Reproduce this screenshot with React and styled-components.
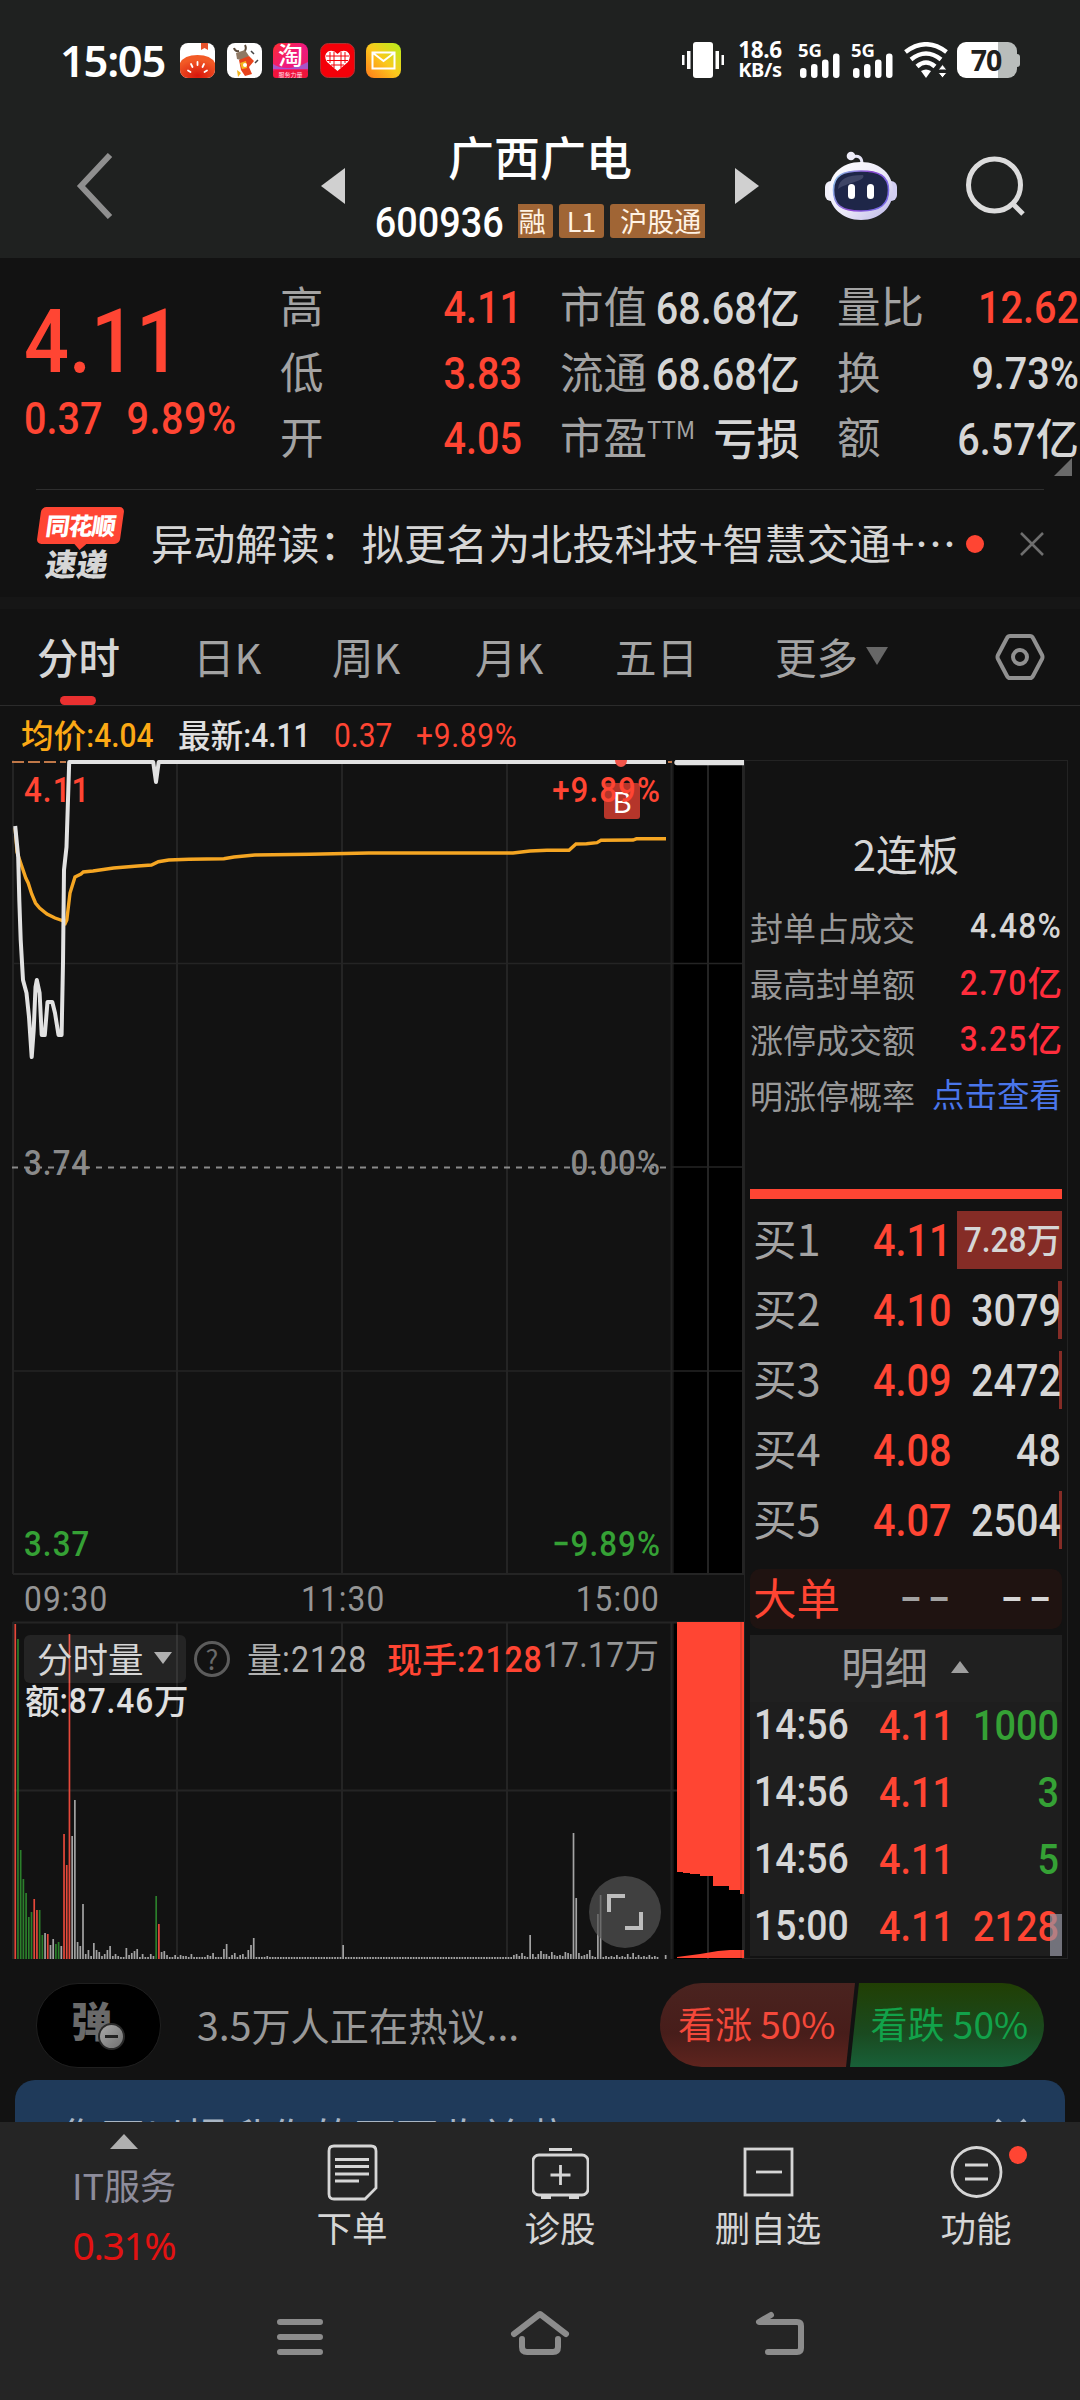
import React from "react"
import styled, { createGlobalStyle } from "styled-components"

const RED = "#ff4533"
const GREEN = "#35a135"
const LIGHT = "#d6d6d6"
const GREY = "#a3a3a3"

const GlobalStyle = createGlobalStyle`
  body {
    margin: 0;
    background: #121212;
    font-family: "Noto Sans CJK SC", "Noto Sans", sans-serif;
    -webkit-font-smoothing: antialiased;
  }
  * {
    box-sizing: border-box;
  }
  svg {
    display: block;
    flex: none;
  }
`

const Screen = styled.div`
  width: 1080px;
  height: 2400px;
  overflow: hidden;
  background: #121212;
  display: flex;
  flex-direction: column;
`

// figures are set tall and narrow, hanzi next to them keep their shape
const Figure = styled.span`
  font-family: Roboto, sans-serif;
  font-size: ${p => p.size || 45}px;
  font-weight: ${p => p.weight || 500};
  letter-spacing: ${p => p.ls || 0}px;
  color: ${p => p.color || LIGHT};
  line-height: 1;
  white-space: nowrap;
`

const Digits = styled.span`
  display: inline-block;
  font-size: 0.88em;
  transform: translateY(-2px) scaleY(1.135);
`

const Hanzi = styled.span`
  font-family: "Noto Sans CJK SC", sans-serif;
  font-size: 0.96em;
  line-height: 1;
  letter-spacing: 0;
`

const Num = ({ children, ...rest }) => (
  <Figure {...rest}>
    {String(children)
      .split(/([\u4e00-\u9fa5]+)/)
      .filter(Boolean)
      .map((part, i) =>
        /[\u4e00-\u9fa5]/.test(part) ? (
          <Hanzi key={i}>{part}</Hanzi>
        ) : (
          <Digits key={i}>{part}</Digits>
        )
      )}
  </Figure>
)

/* ---------- top ---------- */

const Top = styled.header`
  height: 258px;
  background: #1f2120;
  flex: none;
`

const StatusBar = styled.div`
  height: 120px;
  padding: 0 60px 0 60px;
  display: flex;
  align-items: center;
  color: #fff;
`

const Clock = styled.div`
  font-family: "Noto Sans", sans-serif;
  font-weight: 600;
  font-size: 43.5px;
  letter-spacing: -1.3px;
  line-height: 58px;
  padding-bottom: 1px;
  width: 120px;
`

const AppIcons = styled.div`
  display: flex;
  gap: 11.6px;
  flex: 1;
`

const NetSpeed = styled.div`
  font-family: "Noto Sans", sans-serif;
  font-weight: 700;
  width: 46px;
  margin: 0 15px 0 13px;
  white-space: nowrap;
  display: flex;
  flex-direction: column;
  align-items: center;
`

const Speed = styled.span`
  font-size: ${p => p.size}px;
  line-height: 20.5px;
  letter-spacing: -0.3px;
`

const SignalBox = styled.div`
  width: 53px;
  height: 36px;
  position: relative;
`

const SignalLabel = styled.span`
  position: absolute;
  left: 0;
  top: -1px;
  font-family: "Noto Sans", sans-serif;
  font-weight: 700;
  font-size: 18.5px;
  line-height: 17px;
`

const Battery = styled.div`
  width: 60px;
  height: 36px;
  margin-left: 9px;
  border-radius: 9px;
  background: linear-gradient(90deg, #fff 68%, #b9bdbb 68%);
  color: #1f2120;
  font-family: "Noto Sans", sans-serif;
  font-weight: 700;
  font-size: 28.5px;
  line-height: 36px;
  text-align: center;
  padding-right: 2px;
  letter-spacing: -1px;
`

const BatteryTip = styled.div`
  width: 3px;
  height: 13px;
  background: #b9bdbb;
  border-radius: 0 3px 3px 0;
`

const TitleBar = styled.div`
  height: 138px;
  display: grid;
  grid-template-columns: 321px 24px 390px 24px 66px 72px 1fr;
  align-items: center;
  padding-bottom: 7px;
`

const BackIcon = styled.div`
  padding-left: 76px;
`

const StockName = styled.div`
  display: flex;
  flex-direction: column;
  align-items: center;
  padding-top: 2px;
`

const Name = styled.h1`
  margin: 0;
  font-size: 46px;
  line-height: 66px;
  font-weight: 500;
  color: #fff;
`

const CodeRow = styled.div`
  display: flex;
  align-items: center;
  height: 64px;
  gap: 6px;
  padding-top: 2px;
`

const Code = styled.div`
  margin-right: 8px;
  padding-top: 3px;
`

const Tag = styled.span`
  height: 34px;
  line-height: 33px;
  font-size: 27px;
  color: #fff3e4;
  background: #a06535;
  border-radius: ${p => p.radius || "3px"};
  padding: ${p => p.pad || "0 8px"};
`

const SearchIcon = styled.div`
  padding-left: 67px;
`

/* ---------- quote ---------- */

const Quote = styled.section`
  height: 231px;
  flex: none;
  display: grid;
  grid-template-columns: 280px 242px 38px 240px 37px 242px;
  position: relative;
`

const PriceBlock = styled.div`
  padding: 39px 0 0 24px;
`

const BigPrice = styled.div`
  height: 88px;
  display: flex;
  align-items: center;
  padding-bottom: 2px;
`

const ChangeRow = styled.div`
  display: flex;
  gap: 24px;
  height: 66px;
  align-items: center;
`

const StatColumn = styled.div`
  padding-top: 17px;
  display: flex;
  flex-direction: column;
`

const Stat = styled.div`
  height: 65.5px;
  display: flex;
  justify-content: space-between;
  align-items: center;
`

const StatLabel = styled.span`
  font-size: 43.5px;
  line-height: 60px;
  padding-bottom: 5px;
  color: ${GREY};
  white-space: nowrap;

  sup {
    font-size: 24px;
    line-height: 20px;
    vertical-align: 15px;
  }
`

const Corner = styled.div`
  position: absolute;
  left: 1054px;
  top: 200px;
  border-left: 18px solid transparent;
  border-bottom: 18px solid #6a6a6a;
`

const News = styled.section`
  height: 108px;
  flex: none;
  margin: 0 36px;
  border-top: 1px solid #2e2e2e;
  display: flex;
  align-items: center;
`

const NewsLogo = styled.div`
  width: 90px;
  height: 74px;
  margin-right: 25px;
  font-weight: 900;
  text-align: center;
`

const LogoTop = styled.div`
  height: 37px;
  width: 83px;
  margin-left: 3px;
  transform: skewX(-8deg);
  border-radius: 5px;
  background: ${RED};
  color: #fff;
  font-size: 24px;
  line-height: 36px;
  letter-spacing: -1px;
  position: relative;

  &::after {
    content: "";
    position: absolute;
    left: 38px;
    top: 37px;
    border: 6px solid transparent;
    border-top-color: ${RED};
    border-bottom: 0;
  }
`

const LogoBottom = styled.div`
  color: ${LIGHT};
  font-size: 31px;
  line-height: 37px;
  padding-right: 7px;
  transform: skewX(-9deg);
`

const NewsText = styled.div`
  font-size: 42px;
  line-height: 60px;
  letter-spacing: 0.15px;
  padding-bottom: 3px;
  color: ${LIGHT};
  white-space: nowrap;
  width: 815px;
`

const Dot = styled.i`
  width: 18px;
  height: 18px;
  border-radius: 50%;
  background: ${RED};
`

const CloseIcon = styled.div`
  margin-left: auto;
`

const Band = styled.div`
  height: 12px;
  flex: none;
  background: #161616;
`

/* ---------- tabs ---------- */

const Tabs = styled.nav`
  height: 97px;
  flex: none;
  border-bottom: 1px solid #2b2b2b;
  display: flex;
  padding-left: 37px;
`

const Tab = styled.div`
  width: ${p => p.w}px;
  font-size: 41.5px;
  line-height: 94px;
  height: 96px;
  color: ${p => (p.active ? LIGHT : GREY)};
  font-weight: ${p => (p.active ? 500 : 400)};
  display: flex;
  align-items: center;
  padding-bottom: 2px;
  position: relative;

  &::after {
    content: "";
    display: ${p => (p.active ? "block" : "none")};
    position: absolute;
    left: 23px;
    bottom: 0;
    width: 36px;
    height: 9px;
    border-radius: 5px;
    background: #e93030;
  }
`

const Triangle = styled.i`
  width: 0;
  height: 0;
  border-left: ${p => p.w}px solid transparent;
  border-right: ${p => p.w}px solid transparent;
  border-${p => (p.up ? "bottom" : "top")}: ${p => p.h}px solid ${p => p.color};
  margin: ${p => p.m || 0};
`

const HexIcon = styled.div`
  margin-left: auto;
  padding: 24px 35px 0 0;
`

/* ---------- chart ---------- */

const Main = styled.main`
  height: 1254px;
  flex: none;
  display: flex;
`

const ChartSide = styled.div`
  width: 744px;
`

const Legend = styled.div`
  height: 54px;
  padding: 5px 0 0 21px;
  display: flex;
  align-items: center;
`

const LegendItem = styled.div`
  width: ${p => p.w}px;
`

const ChartBox = styled.div`
  height: 1200px;
  position: relative;
`

const LabelBox = styled.div`
  position: absolute;
  height: 40px;
  display: flex;
  align-items: center;
  top: ${p => p.y - 19}px;
  ${p => (p.right ? `right: ${744 - p.right}px;` : `left: ${p.x}px;`)}
`

const Label = ({ x, right, y, ...rest }) => (
  <LabelBox x={x} y={y} right={right}>
    <Num ls={1.1} {...rest} />
  </LabelBox>
)

const Badge = styled.div`
  position: absolute;
  left: 604px;
  top: 23px;
  width: 36px;
  height: 36px;
  border-radius: 3px;
  background: #b5352a;
  color: #fff;
  font-size: 29px;
  line-height: 35px;
  text-align: center;
`

const VolumePicker = styled.div`
  position: absolute;
  left: 24px;
  top: 875px;
  width: 162px;
  height: 48px;
  border-radius: 6px;
  background: rgba(255, 255, 255, 0.08);
  display: flex;
  align-items: center;
  padding: 0 0 3px 13px;
  font-size: 35.5px;
  color: ${LIGHT};
`

const Help = styled.div`
  position: absolute;
  left: 194px;
  top: 881px;
  width: 36px;
  height: 36px;
  border: 3px solid #5c5c5c;
  border-radius: 50%;
  color: #6a6a6a;
  font-size: 27px;
  line-height: 29px;
  text-align: center;
`

const Expand = styled.div`
  position: absolute;
  left: 589px;
  top: 1116px;
  width: 72px;
  height: 72px;
  border-radius: 50%;
  background: rgba(84, 84, 84, 0.7);
  padding: 16px;
`

/* ---------- order panel ---------- */

const Panel = styled.aside`
  width: 324px;
  height: 1199px;
  margin-top: 54px;
  border: 1px solid #232323;
  padding: 0 5px;
`

const Streak = styled.div`
  height: 138px;
  padding-top: 60px;
  font-size: 41.5px;
  line-height: 64px;
  color: ${LIGHT};
  text-align: center;
`

const Fact = styled.div`
  height: 56px;
  display: flex;
  justify-content: space-between;
  align-items: center;
  font-size: 33px;
  color: #989898;
  line-height: 50px;
`

const Link = styled.span`
  color: #4a76ea;
  font-size: 32.5px;
  padding-bottom: 4px;
`

const SealBar = styled.div`
  height: 10px;
  margin: 66px 0 6px;
  background: ${RED};
`

const BidRow = styled.div`
  height: 70px;
  display: grid;
  grid-template-columns: 120px 80px 1fr;
  align-items: center;
  padding-left: 3px;
`

const RowLabel = styled.span`
  font-size: 43.5px;
  line-height: 56px;
  padding-bottom: 5px;
  color: ${p => p.color || GREY};
`

const BidVolume = styled.div`
  height: 58px;
  display: flex;
  align-items: center;
  justify-content: flex-end;
  width: 105px;
  padding-right: 1px;
  justify-self: end;
  background: linear-gradient(#852c26, #852c26) right / ${p => p.bar}px 100% no-repeat;
`

const BigOrder = styled.div`
  height: 60px;
  margin: 14px 0 6px;
  border-radius: 10px;
  background: #1f1311;
  display: grid;
  grid-template-columns: 147px 1fr 61px;
  align-items: center;
  padding-left: 3px;
  overflow: hidden;
`

const Details = styled.div`
  height: 321px;
  background: #1e1e1e;
  position: relative;
`

const DetailsHead = styled.div`
  height: 67px;
  background: #202020;
  display: flex;
  align-items: center;
  padding-left: 91px;
`

const Trade = styled.div`
  height: 67px;
  display: grid;
  grid-template-columns: 125px 80px 1fr;
  padding: 1px 3px 22px 4px;
  align-items: center;
`

const TradeVolume = styled.div`
  text-align: right;
`

const Thumb = styled.div`
  position: absolute;
  right: 0;
  bottom: 0;
  width: 12px;
  height: 42px;
  background: rgba(150, 150, 162, 0.7);
`

/* ---------- bottom ---------- */

const Social = styled.section`
  height: 120px;
  flex: none;
  padding: 23px 36px 0;
  display: flex;
`

const DanmuButton = styled.div`
  width: 125px;
  height: 85px;
  border: 1px solid #1f1f1f;
  border-radius: 42px;
  background: #000;
  position: relative;
  padding-left: 34px;
  font-size: 41px;
  font-weight: 900;
  line-height: 70px;
  color: #6a6a6a;
`

const MinusBadge = styled.div`
  position: absolute;
  left: 61px;
  top: 39px;
  width: 27px;
  height: 27px;
  border-radius: 50%;
  border: 2px solid #2a2a2a;
  background: linear-gradient(135deg, #a8a8a8, #707070);

  &::after {
    content: "";
    position: absolute;
    left: 5px;
    top: 10px;
    width: 13px;
    height: 3px;
    background: #222;
  }
`

const Talk = styled.div`
  font-size: 39.2px;
  line-height: 82px;
  color: #999;
  margin-left: 36px;
  flex: 1;
`

const Vote = styled.div`
  width: ${p => p.w}px;
  height: 84px;
  margin-left: ${p => p.ml || 0}px;
  font-size: 37px;
  line-height: 80px;
  text-align: ${p => (p.up ? "left" : "right")};
  padding: ${p => (p.up ? "0 0 0 18px" : "0 16px 0 0")};
  white-space: nowrap;
  color: ${p => (p.up ? "#f4483a" : "#12a24a")};
  background: ${p =>
    p.up
      ? "linear-gradient(#4a231f, #471d1a 60%, #5e241e)"
      : "linear-gradient(#213f04, #1a4a20 60%, #186038)"};
  border-radius: ${p => (p.up ? "42px 0 0 42px" : "0 42px 42px 0")};
  clip-path: ${p =>
    p.up
      ? "polygon(0 0, 100% 0, calc(100% - 9px) 100%, 0 100%)"
      : "polygon(9px 0, 100% 0, 100% 100%, 0 100%)"};
`

const Banner = styled.div`
  height: 42px;
  flex: none;
  margin: 0 15px;
  border-radius: 20px 20px 0 0;
  background: #1f3a5a;
  color: #a9b6c4;
  overflow: hidden;
  display: flex;
  justify-content: space-between;
  padding: 32px 36px 0 45px;
  font-size: 42px;
  line-height: 48px;
`

const BottomNav = styled.nav`
  height: 149px;
  flex: none;
  background: #252525;
  display: grid;
  grid-template-columns: 248px repeat(4, 208px);
`

const IndexCell = styled.div`
  display: flex;
  flex-direction: column;
  align-items: center;
  padding-top: 12px;
  font-size: 36px;
  line-height: 40px;
  color: #8d8c9b;
`

const IndexChange = styled.div`
  font-size: 39px;
  line-height: 50px;
  letter-spacing: -1.4px;
  margin-top: 16px;
  color: #e31212;
  font-family: "Noto Sans", sans-serif;
`

const NavItem = styled.div`
  display: flex;
  flex-direction: column;
  align-items: center;
  padding-top: 20px;
  position: relative;
  font-size: 35.5px;
  line-height: 50px;
  color: ${LIGHT};
`

const NavDot = styled(Dot)`
  position: absolute;
  left: 137px;
  top: 24px;
`

const SystemNav = styled.div`
  height: 130px;
  flex: none;
  background: #252525;
  display: flex;
  justify-content: center;
  gap: 180px;
  padding-top: 35px;
`

/* ---------- data ---------- */

const stats = [
  [
    ["高", "4.11", RED],
    ["低", "3.83", RED],
    ["开", "4.05", RED],
  ],
  [
    ["市值", "68.68亿"],
    ["流通", "68.68亿"],
    ["市盈", "亏损"],
  ],
  [
    ["量比", "12.62", RED],
    ["换", "9.73%"],
    ["额", "6.57亿"],
  ],
]

const tabs = [
  ["日K", 139],
  ["周K", 143],
  ["月K", 140],
  ["五日", 160],
]

const facts = [
  ["封单占成交", "4.48%", LIGHT],
  ["最高封单额", "2.70亿", "#ff2d3c"],
  ["涨停成交额", "3.25亿", "#ff2d3c"],
]

const bids = [
  ["买1", "4.11", "7.28万", 105],
  ["买2", "4.10", "3079", 4],
  ["买3", "4.09", "2472", 3],
  ["买4", "4.08", "48", 0],
  ["买5", "4.07", "2504", 3],
]

const trades = [
  ["14:56", "4.11", "1000", GREEN],
  ["14:56", "4.11", "3", GREEN],
  ["14:56", "4.11", "5", GREEN],
  ["15:00", "4.11", "2128", RED],
]

const priceLine =
  "15.2,66 18.2,97 19.3,140 20.7,180 23,220 26.5,233 29,257 31.7,297 33.7,270 35.5,227 36.8,220 39.6,233 41.7,275 44.8,275 47.5,242 52.3,242 55,253 58.5,275 61.6,275 63,203 64,110 66.5,87 69.2,2 153.2,2 156,22 158.7,2 666,2"

const avgLine =
  "15.2,68 17,92 20,101 22.4,108 25.8,118 28.2,123 31.7,134 35.5,143 39.6,148 47,154 55,158 63.4,161 65.4,163 66.8,160 70,133 75,117 81,114 83.3,112 93,111 113.6,108 137.7,106 151.5,105 158.4,101.7 168.7,100 189,99.3 223.8,98.7 234,97 254.8,95 310,94.3 368.5,93 513,93 530,91 547,90.2 569,90.2 576,84 586.5,83.7 597,82.6 601,80.3 633,80 636.4,78.8 666,78.8"

// one bar a minute, "r" red and "g" green, the rest are flat
const opening =
  "335r 320g 109g 80g 66g 42g 47g 60r 49r 49g 24g 26 25r 14 20 15g 17g 13 125r 94r 325r 123 159 17 13 55 5 9 3 16 9 7 3 5 9 13 3 5 3 2 2 11 4 6 8 10 2 5 2 2 5 3 63g 35r 7 8 4 2 2 4 2 4 3 3 2 5 2 2 2 2 2 4 3 6 2 2 2 10 15 2 4 6 2 4 5 2 9 14 21".split(
    " "
  )
const spikes = {
  93: 3, 104: 2, 121: 14, 136: 2, 184: 4, 185: 5, 186: 3, 187: 6, 188: 3,
  190: 24, 191: 5, 193: 5, 194: 8, 195: 5, 196: 5, 197: 3, 198: 7, 199: 4,
  200: 3, 201: 4, 202: 3, 203: 7, 204: 6, 205: 5, 206: 126, 207: 61, 208: 6,
  209: 3, 210: 4, 211: 5, 212: 9, 213: 3, 214: 2, 215: 45, 216: 64, 218: 3,
  220: 3, 222: 4, 224: 3, 226: 5, 228: 6, 230: 4, 232: 3, 234: 4, 236: 3,
  238: 0, 239: 0, 240: 4,
}
const barColor = { r: "#e5483a", g: "#2b7f2b" }
const bars = Array.from({ length: 241 }, (_, i) => {
  const raw = opening[i] || String(spikes[i] ?? 2)
  return {
    x: 14.4 + i * 2.71,
    h: parseInt(raw, 10),
    fill: barColor[raw.slice(-1)] || "#a3a3a3",
  }
})

/* ---------- drawings ---------- */

const AppIcon = ({ children }) => (
  <svg width="35" height="35" viewBox="0 0 35 35">
    {children}
  </svg>
)

const Signal = () => (
  <SignalBox>
    <SignalLabel>5G</SignalLabel>
    <svg width="42" height="36" fill="#fff">
      <rect x="2" y="26" width="6.5" height="10" rx="3" />
      <rect x="13" y="22" width="6.5" height="14" rx="3" />
      <rect x="24" y="17.5" width="6.5" height="18.5" rx="3" />
      <rect x="35" y="11.5" width="6.5" height="24.5" rx="3" />
    </svg>
  </SignalBox>
)

const Robot = () => (
  <svg width="72" height="70" viewBox="0 0 72 70">
    <defs>
      <linearGradient id="shell" x1="0" y1="0" x2="1" y2="1">
        <stop offset="0" stopColor="#fff" />
        <stop offset="0.55" stopColor="#ebe9f8" />
        <stop offset="1" stopColor="#b9b4e6" />
      </linearGradient>
      <linearGradient id="rim" x1="0" y1="0" x2="1" y2="0.4">
        <stop offset="0" stopColor="#8fd0ef" />
        <stop offset="0.6" stopColor="#8a45cf" />
        <stop offset="1" stopColor="#7a6ae8" />
      </linearGradient>
    </defs>
    <path d="M27 6Q37 3 37 13" fill="none" stroke="#e6e5f6" strokeWidth="3" />
    <circle cx="26" cy="5" r="4.3" fill="#eeedf9" />
    <rect x="0" y="30" width="12" height="20" rx="6" fill="#f1f0fa" />
    <rect x="60" y="30" width="12" height="20" rx="6" fill="#d2cef2" />
    <path
      d="M36 11C56 11 68 24 68 40S55 69 36 69 4 56 4 40 16 11 36 11Z"
      fill="url(#shell)"
    />
    <path
      d="M36 20C54 20 63.500 25 63.500 39S56 60 36 60 8.500 54 8.500 39 18 20 36 20Z"
      fill="#1e2648"
      stroke="url(#rim)"
      strokeWidth="1.600"
    />
    <path d="M13 38C14 28 22 24 38 24 42 30 20 32 13 38Z" fill="#3e4566" />
    <rect x="23" y="33" width="7" height="15" rx="3.500" fill="#fff" />
    <rect x="42" y="33" width="7" height="15" rx="3.500" fill="#fff" />
  </svg>
)

const Chart = () => (
  <svg width="744" height="1200" viewBox="0 0 744 1200">
    <rect x="674" y="0" width="69" height="814" fill="#000" />
    <rect x="674" y="862" width="69" height="337" fill="#000" />
    <g stroke="#242424" strokeWidth="2">
      {[13, 177, 342, 507, 671.5, 708, 743].map(x => (
        <path key={x} d={`M${x} 0V814M${x} 862V1199`} />
      ))}
      {[203.5, 407, 611, 814, 862.5, 1030.5].map(y => (
        <path
          key={y}
          d={`M${y === 407 ? 672 : 13} ${y}H744`}
          strokeWidth={y === 814 || y > 850 ? 2 : 1.5}
        />
      ))}
    </g>
    <path
      d="M12 407.5H666"
      stroke="#8a8a8a"
      strokeWidth="2"
      strokeDasharray="6 6"
    />
    <path d="M12 2H66M668 2H672" stroke="#c07848" strokeWidth="2" strokeDasharray="12 4" />
    <polyline points={avgLine} fill="none" stroke="#f5a623" strokeWidth="3.4" />
    <polyline
      points={priceLine}
      fill="none"
      stroke="#e2e2e2"
      strokeWidth="4"
      strokeLinejoin="round"
    />
    <path d="M677 2.500H744" stroke="#e2e2e2" strokeWidth="5.500" strokeLinecap="round" />
    <path d="M615 0a6 7 0 0 0 12 0z" fill="#f2554a" />
    {bars.map(b => (
      <rect key={b.x} x={b.x} y={1199 - b.h} width="1.7" height={b.h} fill={b.fill} />
    ))}
    <path
      d="M677 862H744V1134H740V1130H729V1126H713V1116H700V1114H690V1113H683V1112H677Z"
      fill={RED}
    />
    <path d="M677 1198V1197L700 1194 718 1191 730 1190H744V1198Z" fill={RED} />
    <path d="M741 862V1130M741 1190V1198" stroke="#c23a2e" />
  </svg>
)

const navStroke = { fill: "none", stroke: LIGHT, strokeWidth: 2.8 }

const navItems = [
  [
    "下单",
    <>
      <path d="M8 4H45Q50 4 50 9V46L39 57H8Q3 57 3 52V9Q3 4 8 4Z" />
      <path d="M9 17.500H43M9 24.500H43M9 32H43M9 39H33" />
    </>,
  ],
  [
    "诊股",
    <>
      <rect x="-1" y="13" width="55" height="40" rx="6" />
      <path d="M15 7.500H38M26.500 23V43M16.500 33H36.500M7 55.500H17M35 55.500H45" />
    </>,
  ],
  [
    "删自选",
    <>
      <rect x="3" y="7" width="47" height="46" />
      <path d="M14 30H40" />
    </>,
  ],
  [
    "功能",
    <>
      <circle cx="26.500" cy="30" r="24.500" />
      <path d="M15 23H38M15 37H38" />
    </>,
  ],
]

/* ---------- page ---------- */

const Header = () => (
  <Top>
    <StatusBar>
      <Clock>15:05</Clock>
      <AppIcons>
        <AppIcon>
          <defs>
            <radialGradient id="tomato" cx="0.5" cy="0.9" r="0.7">
              <stop offset="0" stopColor="#d8160c" />
              <stop offset="1" stopColor="#f25a26" />
            </radialGradient>
            <clipPath id="tile">
              <rect width="35" height="35" rx="8" />
            </clipPath>
          </defs>
          <g clipPath="url(#tile)">
            <rect width="35" height="35" fill="#fff" />
            <path d="M0 20Q4 12 17.500 12T35 20V35H0Z" fill="url(#tomato)" />
            <path d="M21 0H28V7L24.500 5 21 7Z" fill="#e8532c" />
            <path
              d="M17.500 19V22M11 21L12.500 24M24 21L22.500 24M8 27.500L10.500 29M27 27.500L24.500 29"
              stroke="#fff"
              strokeWidth="1.800"
              strokeLinecap="round"
            />
          </g>
        </AppIcon>
        <AppIcon>
          <rect width="35" height="35" rx="8" fill="#fff" />
          <path d="M7 5Q8 9 12 8M18 2Q20 6 17 9" stroke="#5b4a3a" strokeWidth="2" fill="none" />
          <path d="M9 10L18 7 22 13 17 18 10 16Z" fill="#8f7863" />
          <path d="M12 17L22 13 27 18 22 24 25 31 18 33 14 27Z" fill="#e8431c" />
          <path d="M13 20L19 18 20 25 15 26ZM10 27L14 30 11 34Z" fill="#f4b51e" />
          <path d="M24 8L27 11M28 20L31 17" stroke="#444" strokeWidth="1.500" />
          <circle cx="18" cy="22" r="2" fill="#fff" />
        </AppIcon>
        <AppIcon>
          <defs>
            <linearGradient id="tao" x1="0" y1="0" x2="1" y2="1">
              <stop offset="0" stopColor="#ff2d2d" />
              <stop offset="0.5" stopColor="#f01880" />
              <stop offset="1" stopColor="#e8205a" />
            </linearGradient>
          </defs>
          <rect width="35" height="35" rx="8" fill="url(#tao)" />
          <path d="M0 21Q14 30 35 19V26H0Z" fill="#8a6cf0" opacity="0.7" />
          <rect y="27" width="35" height="8" rx="3" fill="#f0143c" />
          <text x="5" y="22" fontSize="25" fontWeight="500" fill="#fff">
            淘
          </text>
          <text x="5.500" y="33.500" fontSize="6" fill="#ffd9e2">
            服务力量
          </text>
        </AppIcon>
        <AppIcon>
          <rect x="0.500" y="0.500" width="34" height="34" rx="8" fill="#f40009" stroke="#a33" />
          <path
            d="M17.500 28L7 19Q3 12 8 8.500 13 6 17.500 11 22 6 27 8.500 32 12 28 19Z"
            fill="#fff"
          />
          <path
            d="M10 9V20M14 9V25M21 9V25M25 9V20M6 13H29M7 17.500H28M11 22H24"
            stroke="#f40009"
            strokeWidth="1"
          />
        </AppIcon>
        <AppIcon>
          <defs>
            <linearGradient id="mail" x1="0" y1="1" x2="1" y2="0">
              <stop offset="0" stopColor="#ff7a1a" />
              <stop offset="0.5" stopColor="#fbc91c" />
              <stop offset="1" stopColor="#b4f01c" />
            </linearGradient>
          </defs>
          <rect width="35" height="35" rx="8" fill="url(#mail)" />
          <path
            d="M6.500 9.500H28.500V25.500H6.500ZM7 10L17.500 18 28 10"
            fill="none"
            stroke="#fff"
            strokeWidth="2"
          />
        </AppIcon>
      </AppIcons>
      <svg width="42" height="36" fill="#fff">
        <rect x="11" y="0" width="20" height="36" rx="3" />
        <rect x="5" y="9" width="3.500" height="18" />
        <rect x="0" y="13" width="2.500" height="10" />
        <rect x="33.500" y="9" width="3.500" height="18" />
        <rect x="39.500" y="13" width="2.500" height="10" />
      </svg>
      <NetSpeed>
        <Speed size={22.5}>18.6</Speed>
        <Speed size={20}>KB/s</Speed>
      </NetSpeed>
      <Signal />
      <Signal />
      <svg width="44" height="36" viewBox="0 0 44 36" fill="none" stroke="#fff" strokeWidth="4.500">
        <path d="M1.500 10Q22 -5.500 42.500 10M7 17.500Q22 5.500 37 17.500M13 24.500Q22 16.500 31 24.500" />
        <path d="M17 29Q22 26 27 29L22 36Z" fill="#fff" stroke="none" />
        <path
          d="M34 28L38.500 22.500 43 28ZM34 30.500L38.500 36 43 30.500Z"
          fill="#fff"
          stroke="#1f2120"
          strokeWidth="1"
        />
      </svg>
      <Battery>70</Battery>
      <BatteryTip />
    </StatusBar>
    <TitleBar>
      <BackIcon>
        <svg width="38" height="66" fill="none" stroke="#8f8f8f" strokeWidth="6">
          <path d="M34 2L5 33 34 64" />
        </svg>
      </BackIcon>
      <svg width="24" height="36" fill="#d0d0d0">
        <path d="M24 0V36L0 18Z" />
      </svg>
      <StockName>
        <Name>广西广电</Name>
        <CodeRow>
          <Code>
            <Num size={43} color="#fff">
              600936
            </Num>
          </Code>
          <Tag radius="0 3px 3px 0" pad="0 7px 0 1px">
            融
          </Tag>
          <Tag>L1</Tag>
          <Tag radius="3px 0 0 3px" pad="0 4px 0 10px">
            沪股通
          </Tag>
        </CodeRow>
      </StockName>
      <svg width="24" height="36" fill="#d0d0d0">
        <path d="M0 0V36L24 18Z" />
      </svg>
      <span />
      <Robot />
      <SearchIcon>
        <svg width="62" height="62" fill="none" stroke="#dcdcdc" strokeWidth="5">
          <circle cx="30.500" cy="30" r="26" />
          <path d="M49 49L59 59" />
        </svg>
      </SearchIcon>
    </TitleBar>
  </Top>
)

const QuoteSummary = () => (
  <Quote>
    <PriceBlock>
      <BigPrice>
        <Num size={90} color={RED}>
          4.11
        </Num>
      </BigPrice>
      <ChangeRow>
        <Num color={RED}>0.37</Num>
        <Num ls={0.5} color={RED}>
          9.89%
        </Num>
      </ChangeRow>
    </PriceBlock>
    {stats.map((column, i) => (
      <React.Fragment key={i}>
        <StatColumn>
          {column.map(([label, value, color]) => (
            <Stat key={label}>
              <StatLabel>
                {label}
                {label === "市盈" && <sup>TTM</sup>}
              </StatLabel>
              <Num color={color}>{value}</Num>
            </Stat>
          ))}
        </StatColumn>
        {i < 2 && <span />}
      </React.Fragment>
    ))}
    <Corner />
  </Quote>
)

const ChartPanel = () => (
  <ChartSide>
    <Legend>
      <LegendItem w={157}>
        <Num size={34} color="#fca915">
          均价:4.04
        </Num>
      </LegendItem>
      <LegendItem w={156}>
        <Num size={34} color="#e0e0e0">
          最新:4.11
        </Num>
      </LegendItem>
      <LegendItem w={82}>
        <Num size={34} weight={400} color={RED}>
          0.37
        </Num>
      </LegendItem>
      <Num size={34} ls={0.7} weight={400} color={RED}>
        +9.89%
      </Num>
    </Legend>
    <ChartBox>
      <Chart />
      <Badge>B</Badge>
      <Label size={35.5} x={24} y={31} color={RED}>
        4.11
      </Label>
      <Label size={35.5} right={661} y={31} color={RED}>
        +9.89%
      </Label>
      <Label size={35.5} x={24} y={404} color="#8a8a8a">
        3.74
      </Label>
      <Label size={35.5} right={661} y={404} color="#8a8a8a">
        0.00%
      </Label>
      <Label size={35.5} x={24} y={785} color={GREEN}>
        3.37
      </Label>
      <Label size={35.5} right={661} y={785} color={GREEN}>
        −9.89%
      </Label>
      <Label size={36} x={24} y={839} weight={400} color="#959595">
        09:30
      </Label>
      <Label size={36} x={301} y={839} weight={400} color="#959595">
        11:30
      </Label>
      <Label size={36} right={660} y={839} weight={400} color="#959595">
        15:00
      </Label>
      <VolumePicker>
        分时量
        <Triangle w={9} h={12} color="#b0b0b0" m="0 0 0 10px" />
      </VolumePicker>
      <Help>?</Help>
      <Label size={36.5} x={247} y={899} weight={400} color="#b0b0b0">
        量:2128
      </Label>
      <Label size={36.5} ls={0.8} x={387} y={899} color={RED}>
        现手:2128
      </Label>
      <Label size={36} ls={0.4} right={659} y={894} weight={400} color="#959595">
        17.17万
      </Label>
      <Label size={36} ls={0.9} x={25} y={940} color="#e0e0e0">
        额:87.46万
      </Label>
      <Expand>
        <svg width="40" height="40" fill="none" stroke="#bdbdbd" strokeWidth="4">
          <path d="M4 20V4H20M36 20V36H20" />
        </svg>
      </Expand>
    </ChartBox>
  </ChartSide>
)

const OrderPanel = () => (
  <Panel>
    <Streak>2连板</Streak>
    {facts.map(([label, value, color]) => (
      <Fact key={label}>
        {label}
        <Num size={36} ls={1.2} color={color}>
          {value}
        </Num>
      </Fact>
    ))}
    <Fact>
      明涨停概率
      <Link>点击查看</Link>
    </Fact>
    <SealBar />
    {bids.map(([label, price, volume, bar]) => (
      <BidRow key={label}>
        <RowLabel>{label}</RowLabel>
        <Num color={RED}>{price}</Num>
        <BidVolume bar={bar}>
          <Num size={bar > 100 ? 36 : 45}>{volume}</Num>
        </BidVolume>
      </BidRow>
    ))}
    <BigOrder>
      <RowLabel color={RED}>大单</RowLabel>
      <Num size={38} ls={7} weight={600} color={GREY}>
        ––
      </Num>
      <Num size={38} ls={7} weight={600}>
        ––
      </Num>
    </BigOrder>
    <Details>
      <DetailsHead>
        <RowLabel color="#9e9e9e">明细</RowLabel>
        <Triangle up w={9} h={12} color="#9e9e9e" m="0 0 4px 23px" />
      </DetailsHead>
      {trades.map(([time, price, volume, color], i) => (
        <Trade key={i}>
          <Num size={42.5}>{time}</Num>
          <Num size={43} color={RED}>
            {price}
          </Num>
          <TradeVolume>
            <Num size={43} color={color}>
              {volume}
            </Num>
          </TradeVolume>
        </Trade>
      ))}
      <Thumb />
    </Details>
  </Panel>
)

const App = () => (
  <Screen>
    <GlobalStyle />
    <Header />
    <QuoteSummary />
    <News>
      <NewsLogo>
        <LogoTop>同花顺</LogoTop>
        <LogoBottom>速递</LogoBottom>
      </NewsLogo>
      <NewsText>异动解读：拟更名为北投科技+智慧交通+…</NewsText>
      <Dot />
      <CloseIcon>
        <svg width="24" height="24" stroke="#6e6e6e" strokeWidth="2.500">
          <path d="M1 1L23 23M23 1L1 23" />
        </svg>
      </CloseIcon>
    </News>
    <Band />
    <Tabs>
      <Tab w={156} active>
        分时
      </Tab>
      {tabs.map(([name, w]) => (
        <Tab key={name} w={w}>
          {name}
        </Tab>
      ))}
      <Tab w={130}>
        更多
        <Triangle w={11} h={18} color="#676767" m="0 0 0 8px" />
      </Tab>
      <HexIcon>
        <svg width="50" height="48" fill="none" stroke="#909090" strokeWidth="4">
          <path
            d="M15 3H35Q37 3 38 5L47 22Q48 24 47 26L38 43Q37 45 35 45H15Q13 45 12 43L3 26Q2 24 3 22L12 5Q13 3 15 3Z"
            strokeLinejoin="round"
          />
          <circle cx="25" cy="24" r="7" />
        </svg>
      </HexIcon>
    </Tabs>
    <Main>
      <ChartPanel />
      <OrderPanel />
    </Main>
    <Social>
      <DanmuButton>
        弹
        <MinusBadge />
      </DanmuButton>
      <Talk>3.5万人正在热议...</Talk>
      <Vote w={195} up>
        看涨 50%
      </Vote>
      <Vote w={194} ml={-5}>
        看跌 50%
      </Vote>
    </Social>
    <Banner>
      <span>您可以提升你的页面收益啦</span>
      <svg width="36" height="36" stroke="#a9b6c4" strokeWidth="4">
        <path d="M4 8L32 36M32 8L4 36" />
      </svg>
    </Banner>
    <BottomNav>
      <IndexCell>
        <Triangle up w={14} h={15} color="#b0b0b0" m="0 0 15px" />
        IT服务
        <IndexChange>0.31%</IndexChange>
      </IndexCell>
      {navItems.map(([name, drawing]) => (
        <NavItem key={name}>
          <svg width="57" height="60" viewBox="-2 0 57 60" {...navStroke}>
            {drawing}
          </svg>
          {name}
          {name === "功能" && <NavDot />}
        </NavItem>
      ))}
    </BottomNav>
    <SystemNav>
      <svg width="60" height="60" fill="none" stroke="#8c8c8c" strokeWidth="6" strokeLinecap="round">
        <path d="M10 16H50M10 31H50M10 46H50" />
      </svg>
      <svg width="60" height="60" fill="none" stroke="#8c8c8c" strokeWidth="6" strokeLinecap="round">
        <path d="M4 28L30 8 56 28M12 33V41Q12 46 17 46H43Q48 46 48 41V33" strokeLinejoin="round" />
      </svg>
      <svg width="60" height="60" fill="none" stroke="#8c8c8c" strokeWidth="6" strokeLinecap="round">
        <path d="M21 9L9 16H47Q51 16 51 20V42Q51 46 47 46H18" strokeLinejoin="round" />
      </svg>
    </SystemNav>
  </Screen>
)

export default App
